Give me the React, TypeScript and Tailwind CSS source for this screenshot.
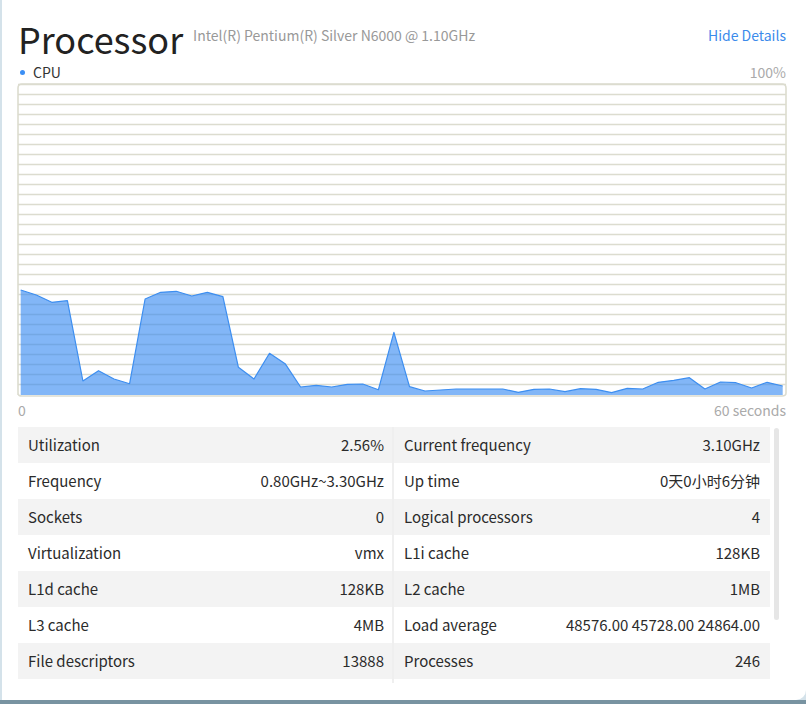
import React from "react";

const ys = [290,295,302.3,300.7,381,370.7,379,383.7,299,292.3,291.3,296,292.3,296.7,367.3,379,353.3,363.7,387,385.3,387,384.3,384,389.7,332.3,386.7,391,390,389,389,389,389,392.3,389.3,389,391.7,388.7,389.3,392.7,388.3,389,382.3,380.3,377.7,389,382,382.7,388,382.3,386];

function Chart() {
  const W = 770;
  const H = 315;
  const pts = ys.map((y, i) => [3.7 + i * 15.551, y - 83] as [number, number]);
  const line = pts.map((p, i) => `${i === 0 ? "M" : "L"}${p[0].toFixed(1)},${p[1].toFixed(1)}`).join(" ");
  const area = `${line} L${pts[pts.length - 1][0].toFixed(1)},312 L${pts[0][0].toFixed(1)},312 Z`;
  const grid = [];
  for (let k = 0; k < 31; k++) {
    grid.push(<line key={k} x1={1} x2={W - 1} y1={1.5 + k * 10} y2={1.5 + k * 10} stroke="#dcdccf" strokeWidth={1.4} />);
  }
  return (
    <svg width={W} height={H} viewBox={`0 0 ${W} ${H}`} className="block">
      {grid}
      <path d={area} fill="#2f86f2" fillOpacity={0.6} />
      <path d={line} fill="none" stroke="#3d8ef0" strokeWidth={1.2} strokeLinejoin="round" />
      <path d={`M1,${H - 3} L1,5 Q1,1 5,1 L${W - 5},1 Q${W - 1},1 ${W - 1},5 L${W - 1},${H - 5} Q${W - 1},${H - 2} ${W - 5},${H - 2} L5,${H - 2} Q1,${H - 2} 1,${H - 5}`} fill="none" stroke="#dcdccf" strokeWidth={1.6} />
    </svg>
  );
}

const left: [string, string][] = [
  ["Utilization", "2.56%"],
  ["Frequency", "0.80GHz~3.30GHz"],
  ["Sockets", "0"],
  ["Virtualization", "vmx"],
  ["L1d cache", "128KB"],
  ["L3 cache", "4MB"],
  ["File descriptors", "13888"],
];
const right: [string, string][] = [
  ["Current frequency", "3.10GHz"],
  ["Up time", "0天0小时6分钟"],
  ["Logical processors", "4"],
  ["L1i cache", "128KB"],
  ["L2 cache", "1MB"],
  ["Load average", "48576.00 45728.00 24864.00"],
  ["Processes", "246"],
];

function Col({ rows }: { rows: [string, string][] }) {
  return (
    <div className="flex flex-col w-[376px]">
      {rows.map(([k, v], i) => (
        <div
          key={k}
          className={`flex items-center justify-between h-[36px] px-[10px] text-[15px] text-[#2b2b2b] ${i % 2 === 0 ? "bg-[#f3f3f3]" : "bg-white"}`}
        >
          <span>{k}</span>
          <span>{v}</span>
        </div>
      ))}
    </div>
  );
}

export default function App() {
  return (
    <div
      className="w-[806px] h-[704px] bg-[#d4e2ea] flex flex-col overflow-hidden"
      style={{ fontFamily: '"Noto Sans CJK SC", "Noto Sans", sans-serif' }}
    >
      <div className="ml-[2px] h-[700px] bg-white rounded-br-[10px] flex flex-col pl-[15px] pr-[20px]">
        <div className="flex items-start justify-between pt-[20px] h-[56px]">
          <div className="flex items-start">
            <span className="text-[36px] leading-none text-[#222] ml-[1px]">Processor</span>
            <span className="text-[14px] leading-none text-[#999] ml-[10px] mt-[8px]">Intel(R) Pentium(R) Silver N6000 @ 1.10GHz</span>
          </div>
          <span className="text-[14px] leading-none text-[#3b8beb] mt-[8px]">Hide Details</span>
        </div>
        <div className="flex items-center justify-between h-[22px] mt-[5px] text-[14px]">
          <div className="flex items-center gap-[8px] ml-[3px]">
            <span className="w-[5px] h-[5px] rounded-full bg-[#3b8ff5]" />
            <span className="text-[#333]">CPU</span>
          </div>
          <span className="text-[#aaa]">100%</span>
        </div>
        <Chart />
        <div className="flex items-center justify-between h-[24px] text-[14px] text-[#aaa] pl-[1px]">
          <span>0</span>
          <span>60 seconds</span>
        </div>
        <div className="flex mt-[5px] ml-[1px]">
          <Col rows={left} />
          <div className="w-0 border-l-[2px] border-[#efefef] h-[256px] -ml-[2px]" />
          <Col rows={right} />
          <div className="ml-[4px] w-[5px] h-[192px] mt-[1px] rounded-full bg-[#e6e6e6]" />
        </div>
      </div>
      <div className="h-[4px] bg-[#7893a1]" />
    </div>
  );
}
